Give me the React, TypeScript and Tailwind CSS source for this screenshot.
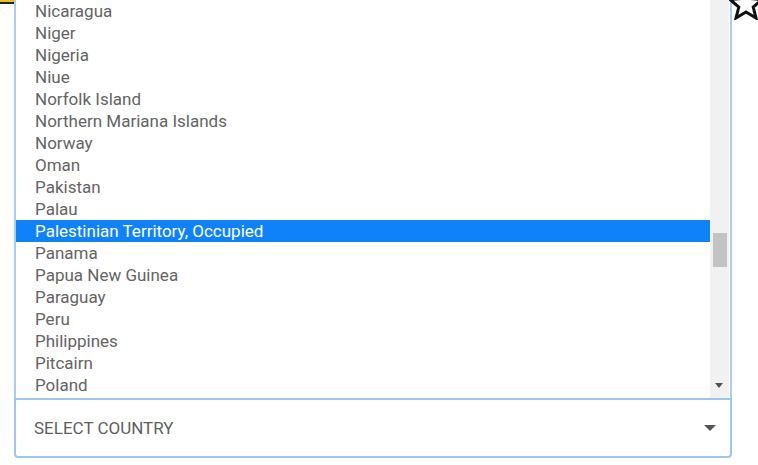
import React from "react";

const countries = [
  "Nicaragua",
  "Niger",
  "Nigeria",
  "Niue",
  "Norfolk Island",
  "Northern Mariana Islands",
  "Norway",
  "Oman",
  "Pakistan",
  "Palau",
  "Palestinian Territory, Occupied",
  "Panama",
  "Papua New Guinea",
  "Paraguay",
  "Peru",
  "Philippines",
  "Pitcairn",
  "Poland",
];

export default function App() {
  return (
    <div
      className="relative w-[758px] h-[465px] overflow-hidden bg-white"
      style={{ fontFamily: "Roboto, 'Noto Sans', sans-serif" }}
    >
      {/* decorative bar top-left */}
      <div className="absolute left-0 top-0 w-[14px] h-[4px] bg-[#e8c21a] border-b-2 border-[#222]" />
      {/* star top-right */}
      <svg className="absolute right-[-6px] top-[-14px]" width="36" height="34" viewBox="0 0 36 34">
        <polygon
          points="18,2 22.5,12.5 34,13.5 25.2,21 28,32 18,26 8,32 10.8,21 2,13.5 13.5,12.5"
          fill="#fff"
          stroke="#111"
          strokeWidth="3"
          strokeLinejoin="miter"
        />
      </svg>

      <div className="ml-[14px] w-[718px] flex flex-col">
        {/* list */}
        <div className="flex h-[398px] border-x-2 border-[#a9cdf0]">
          <div className="flex-1 flex flex-col">
            {countries.map((c) => {
              const sel = c === "Palestinian Territory, Occupied";
              return (
                <div
                  key={c}
                  className={
                    "h-[22px] flex items-center pl-[19px] pt-[1px] text-[17px] leading-none " +
                    (sel ? "bg-[#0f82fa] text-white" : "text-[#646464]")
                  }
                >
                  {c}
                </div>
              );
            })}
          </div>
          <div className="w-[19px] mr-[1px] bg-[#f1f1f1] relative">
            <div className="absolute left-[3px] top-[233px] w-[14px] h-[34px] bg-[#c3c3c3]" />
            <div className="absolute left-[5px] top-[383px] w-0 h-0 border-l-[4px] border-r-[4px] border-t-[5px] border-l-transparent border-r-transparent border-t-[#505050]" />
          </div>
        </div>
        {/* select */}
        <div className="h-[60px] border-2 border-[#9cc6ef] rounded-b-[4px] flex items-center justify-between pl-[18px] pr-[14px]">
          <span className="text-[17px] text-[#5e5e5e] pt-[1px]">SELECT COUNTRY</span>
          <div className="w-0 h-0 border-l-[6px] border-r-[6px] border-t-[6px] border-l-transparent border-r-transparent border-t-[#555]" />
        </div>
      </div>
    </div>
  );
}
